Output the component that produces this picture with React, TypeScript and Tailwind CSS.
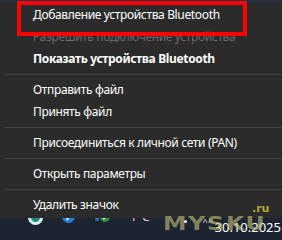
import React from 'react';

const font = { fontFamily: '"Noto Sans", "Open Sans", sans-serif' };

type Entry =
  | { kind: 'item'; label: string; bold?: boolean; disabled?: boolean }
  | { kind: 'sep' };

const entries: Entry[] = [
  { kind: 'item', label: 'Добавление устройства Bluetooth' },
  { kind: 'item', label: 'Разрешить подключение устройства', disabled: true },
  { kind: 'item', label: 'Показать устройства Bluetooth', bold: true },
  { kind: 'sep' },
  { kind: 'item', label: 'Отправить файл' },
  { kind: 'item', label: 'Принять файл' },
  { kind: 'sep' },
  { kind: 'item', label: 'Присоединиться к личной сети (PAN)' },
  { kind: 'sep' },
  { kind: 'item', label: 'Открыть параметры' },
  { kind: 'sep' },
  { kind: 'item', label: 'Удалить значок' },
];

function MenuItem({ label, bold, disabled }: { label: string; bold?: boolean; disabled?: boolean }) {
  return (
    <div
      className={`h-[22px] flex items-center pl-[33px] text-[12px] tracking-[-0.35px] whitespace-nowrap ${
        disabled ? 'text-[#6a6a6a]' : 'text-white'
      } ${bold ? 'font-bold' : 'font-normal'}`}
    >
      {label}
    </div>
  );
}

function Taskbar() {
  return (
    <div className="relative h-[22px] bg-[#1c2331] overflow-hidden flex items-start">
      {/* tray icons, their tops hidden under the menu */}
      <div className="ml-[28px] -mt-[8px] w-[15px] h-[15px] rounded-full border-[3px] border-[#d8f0ee] bg-[#1a8c86]" />
      <div className="ml-[19px] -mt-[8px] w-[13px] h-[13px] rounded-full bg-[#1f7fe0] flex items-end justify-center">
        <span className="text-white text-[8px] leading-none font-bold mb-[1px]">✓</span>
      </div>
      <div className="ml-[20px] -mt-[7px] w-[4px] h-[10px] rounded-full bg-[#2d6fb5]" />
      <div className="ml-[1px] -mt-[8px] w-[10px] h-[12px] rounded-full bg-[#1f9a3a] flex items-end justify-center">
        <span className="text-white text-[7px] leading-none font-bold mb-[1px]">✓</span>
      </div>
      <div className="ml-[20px] -mt-[8px] text-[12px] text-[#d0d0d0] leading-[14px]" style={font}>
        1°C
      </div>
      <div className="ml-[34px] mt-[2px] w-[3px] h-[3px] rounded-full bg-white" />
      <div className="ml-[16px] -mt-[1px] text-[9px] text-[#e0e0e0] leading-none">^^</div>
      <div className="ml-auto mt-[1px] mr-[1px] text-[13px] text-white leading-[16px]" style={font}>
        30.10.2025
      </div>
    </div>
  );
}

export default function App() {
  return (
    <div className="relative w-[282px] h-[240px] overflow-hidden bg-[#2b2b2b] select-none" style={font}>
      <div className="h-px bg-[#1f3350]" />
      <div className="pt-[3px] pb-[2px] bg-[#2b2b2b]">
        {entries.map((e, i) =>
          e.kind === 'sep' ? (
            <div key={i} className="my-[4px] ml-[4px] h-px bg-[#434343]" />
          ) : (
            <MenuItem key={i} label={e.label} bold={e.bold} disabled={e.disabled} />
          )
        )}
      </div>
      <Taskbar />

      {/* red annotation frame */}
      <div className="absolute left-[17px] top-[1px] w-[230px] h-[35px] border-[4px] border-[#ff0000]" />

      {/* watermark */}
      <div
        className="absolute left-[163px] top-[211px] text-[20px] font-bold leading-[24px] tracking-[1.5px] scale-x-[1.18] origin-left text-[#c8c378]/60"
        style={{ fontFamily: '"DejaVu Sans", sans-serif' }}
      >
        MYSKU
      </div>
      <div
        className="absolute left-[252px] top-[202px] text-[11px] font-bold leading-[14px] text-[#b0a830]"
        style={{ fontFamily: '"DejaVu Sans", sans-serif' }}
      >
        .ru
      </div>
    </div>
  );
}
